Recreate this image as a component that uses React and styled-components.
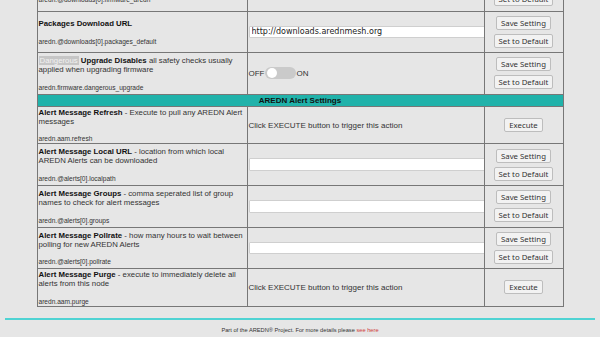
import React from 'react'
import styled, { createGlobalStyle } from 'styled-components';

const GlobalStyle = createGlobalStyle`
    html, body {
        margin: 0;
        padding: 0;
        background: #e6e6e6;
        font-family: "Liberation Sans", Arial, sans-serif;
        color: #222;
        overflow: hidden;
    }
`;

const settings = [
    {
        name: 'Firmware Download URL',
        key: 'aredn.@downloads[0].firmware_aredn',
        type: 'input',
        value: 'http://downloads.arednmesh.org',
    },
    {
        name: 'Packages Download URL',
        key: 'aredn.@downloads[0].packages_default',
        type: 'input',
        value: 'http://downloads.arednmesh.org',
    },
    {
        name: 'Upgrade Disables',
        danger: true,
        desc: 'all safety checks usually applied when upgrading firmware',
        key: 'aredn.firmware.dangerous_upgrade',
        type: 'toggle',
    },
    { header: 'AREDN Alert Settings' },
    {
        name: 'Alert Message Refresh',
        desc: '- Execute to pull any AREDN Alert messages',
        key: 'aredn.aam.refresh',
        type: 'execute',
    },
    {
        name: 'Alert Message Local URL',
        desc: '- location from which local AREDN Alerts can be downloaded',
        key: 'aredn.@alerts[0].localpath',
        type: 'input',
        value: '',
    },
    {
        name: 'Alert Message Groups',
        desc: '- comma seperated list of group names to check for alert messages',
        key: 'aredn.@alerts[0].groups',
        type: 'input',
        value: '',
    },
    {
        name: 'Alert Message Pollrate',
        desc: '- how many hours to wait between polling for new AREDN Alerts',
        key: 'aredn.@alerts[0].pollrate',
        type: 'input',
        value: '',
    },
    {
        name: 'Alert Message Purge',
        desc: '- execute to immediately delete all alerts from this node',
        key: 'aredn.aam.purge',
        type: 'execute',
    },
];

function Toggle() {
    return (
        <ToggleWrap>
            OFF
            <Track><Knob /></Track>
            ON
        </ToggleWrap>
    )
}

function SettingRow({ s }) {
    if (s.header) {
        return (
            <tr>
                <HeaderCell colSpan={3}>{s.header}</HeaderCell>
            </tr>
        )
    }
    return (
        <tr>
            <LabelCell>
                <Label>
                    {s.danger && <Danger>Dangerous</Danger>}
                    {s.danger && ' '}
                    <b>{s.name}</b>
                    {s.desc && <Desc> {s.desc}</Desc>}
                </Label>
                <Sub>{s.key}</Sub>
            </LabelCell>
            <ValueCell>
                {s.type === 'input' && <TextInput defaultValue={s.value} />}
                {s.type === 'toggle' && <Toggle />}
                {s.type === 'execute' && 'Click EXECUTE button to trigger this action'}
            </ValueCell>
            <ActionCell>
                <Actions>
                    {s.type === 'execute' ? (
                        <Button>Execute</Button>
                    ) : (
                        <>
                            <Button>Save Setting</Button>
                            <Button>Set to Default</Button>
                        </>
                    )}
                </Actions>
            </ActionCell>
        </tr>
    )
}

function App() {
    return (
        <Page>
            <GlobalStyle />
            <Table>
                <colgroup>
                    <col style={{ width: 210 }} />
                    <col style={{ width: 237 }} />
                    <col style={{ width: 79 }} />
                </colgroup>
                <tbody>
                    {settings.map((s, i) => <SettingRow key={i} s={s} />)}
                </tbody>
            </Table>
            <Rule />
            <Footer>
                Part of the AREDN® Project. For more details please <a href="#">see here</a>
            </Footer>
        </Page>
    )
}

const Page = styled.div`
    margin-top: -31px;
    padding: 0 5px;
`;

const Table = styled.table`
    width: 527px;
    margin: 0 auto;
    table-layout: fixed;
    border-collapse: collapse;
    border: 1px solid #6a6a6a;
    td {
        border: 1px solid #777;
        padding: 1px;
    }
`;

const HeaderCell = styled.td`
    background: #20b2aa;
    text-align: center;
    font-weight: bold;
    font-size: 8px;
    line-height: 9px;
    color: #111;
`;

const LabelCell = styled.td`
    vertical-align: middle;
`;

const Label = styled.div`
    font-size: 7.8px;
    line-height: 9px;
    color: #111;
    b {
        font-weight: bold;
    }
`;

const Desc = styled.span`
    color: #333;
`;

const Danger = styled.span`
    background: #c6c6c6;
    color: #f2f2f2;
    padding: 0 1px;
`;

const Sub = styled.div`
    margin-top: 9.6px;
    font-size: 6.6px;
    line-height: 7px;
    color: #333;
`;

const ValueCell = styled.td`
    vertical-align: middle;
    font-size: 8px;
    color: #333;
`;

const TextInput = styled.input`
    display: block;
    box-sizing: border-box;
    width: 236px;
    height: 12.5px;
    margin: 0;
    padding: 0 2px;
    border: 1px solid #cfcfcf;
    border-radius: 1px;
    background: #fff;
    font-family: "DejaVu Sans", sans-serif;
    font-size: 8px;
    color: #222;
    outline: none;
`;

const ToggleWrap = styled.div`
    display: flex;
    align-items: center;
    font-size: 8px;
    color: #333;
`;

const Track = styled.span`
    display: inline-flex;
    align-items: center;
    width: 31px;
    height: 12px;
    margin: 0 1px 0 0;
    padding: 0 2px;
    box-sizing: border-box;
    border-radius: 6px;
    background: #cacaca;
`;

const Knob = styled.span`
    width: 10px;
    height: 10px;
    border-radius: 50%;
    background: #fff;
`;

const ActionCell = styled.td`
    vertical-align: middle;
`;

const Actions = styled.div`
    display: flex;
    flex-direction: column;
    align-items: center;
    gap: 4px;
    padding: 3.3px 0;
`;

const Button = styled.button`
    height: 14px;
    padding: 0 4px;
    border: 1px solid #bdbdbd;
    border-radius: 2px;
    background: #f2f2f2;
    font-family: "Noto Sans", "DejaVu Sans", sans-serif;
    font-size: 7.8px;
    line-height: 12px;
    color: #333;
    white-space: nowrap;
`;

const Rule = styled.div`
    height: 2px;
    margin-top: 11px;
    background: #4fd3d3;
`;

const Footer = styled.div`
    margin-top: 7px;
    text-align: center;
    font-size: 5.7px;
    color: #333;
    a {
        color: #d03a3a;
        text-decoration: underline;
    }
`;

export default App;
